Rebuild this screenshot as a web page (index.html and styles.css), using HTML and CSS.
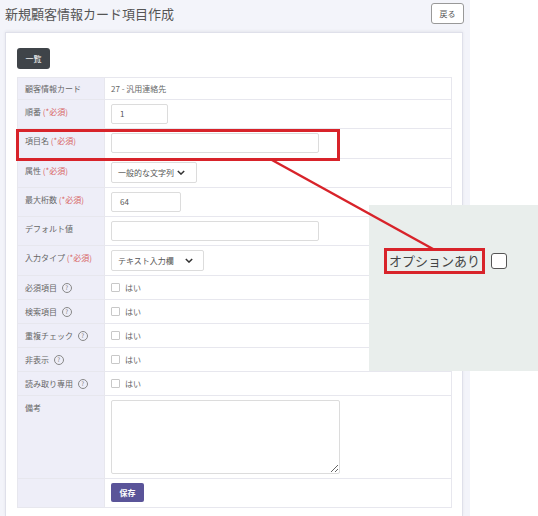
FILE: index.html
```html
<!DOCTYPE html>
<html lang="ja">
<head>
  <meta charset="UTF-8" />
  <title>新規顧客情報カード項目作成</title>
  <link rel="stylesheet" href="styles.css">
</head>
<body>

<div class="screen">
  <div class="page">
    <div class="header">
      <h1>新規顧客情報カード項目作成</h1>
      <button class="btn-back">戻る</button>
    </div>

    <div class="card">
      <button class="btn-list">一覧</button>

      <table class="form-table">
        <tr class="row-text">
          <th>顧客情報カード</th>
          <td>27 - 汎用連絡先</td>
        </tr>
        <tr class="row-input">
          <th>順番 <span class="req">(*必須)</span></th>
          <td><div class="input w-order">1</div></td>
        </tr>
        <tr class="row-input">
          <th>項目名 <span class="req">(*必須)</span></th>
          <td><div class="input w-long"></div></td>
        </tr>
        <tr class="row-input">
          <th>属性 <span class="req">(*必須)</span></th>
          <td>
            <div class="select">一般的な文字列
              <svg class="chev" viewBox="0 0 10 6" width="8" height="5"><path d="M1 1l4 4 4-4" fill="none" stroke="#333" stroke-width="1.8"/></svg>
            </div>
          </td>
        </tr>
        <tr class="row-input">
          <th>最大桁数 <span class="req">(*必須)</span></th>
          <td><div class="input w-digits">64</div></td>
        </tr>
        <tr class="row-input">
          <th>デフォルト値</th>
          <td><div class="input w-long"></div></td>
        </tr>
        <tr class="row-input">
          <th>入力タイプ <span class="req">(*必須)</span></th>
          <td>
            <div class="select select-type">テキスト入力欄
              <svg class="chev" viewBox="0 0 10 6" width="8" height="5"><path d="M1 1l4 4 4-4" fill="none" stroke="#333" stroke-width="1.8"/></svg>
            </div>
          </td>
        </tr>
        <tr class="row-check">
          <th>必須項目 <span class="help">?</span></th>
          <td><span class="check"></span>はい</td>
        </tr>
        <tr class="row-check">
          <th>検索項目 <span class="help">?</span></th>
          <td><span class="check"></span>はい</td>
        </tr>
        <tr class="row-check">
          <th>重複チェック <span class="help">?</span></th>
          <td><span class="check"></span>はい</td>
        </tr>
        <tr class="row-check">
          <th>非表示 <span class="help">?</span></th>
          <td><span class="check"></span>はい</td>
        </tr>
        <tr class="row-check">
          <th>読み取り専用 <span class="help">?</span></th>
          <td><span class="check"></span>はい</td>
        </tr>
        <tr class="row-area">
          <th>備考</th>
          <td><textarea class="memo"></textarea></td>
        </tr>
        <tr class="row-save">
          <th></th>
          <td><button class="btn-save">保存</button></td>
        </tr>
      </table>
    </div>
  </div>

  <!-- annotation overlay -->
  <div class="mark-box"></div>
  <div class="option-panel">
    <span class="option-label">オプションあり</span>
    <span class="option-check"></span>
  </div>
  <svg class="mark-line" width="538" height="516">
    <line x1="272" y1="160" x2="433" y2="249" stroke="#d8232a" stroke-width="2.5"/>
  </svg>
</div>

</body>
</html>
```

FILE: styles.css
```css
body {
  margin: 0;
  background: #fff;
  font-family: "Noto Sans CJK JP", "Noto Sans", sans-serif;
  color: #666;
}

.screen {
  position: relative;
  width: 538px;
  height: 516px;
  overflow: hidden;
}

.page {
  width: 470px;
  height: 516px;
  background: #f3f4fa;
}

.header {
  display: flex;
  justify-content: space-between;
  align-items: flex-start;
  height: 32px;
  padding: 3px 6px 0 5px;
  box-sizing: border-box;
}

.header h1 {
  margin: 3px 0 0;
  font-size: 13px;
  font-weight: normal;
  color: #555;
  line-height: 16px;
}

.btn-back {
  width: 33px;
  height: 21px;
  padding: 0;
  background: #fff;
  border: 1px solid #999;
  border-radius: 3px;
  font-family: inherit;
  font-size: 8px;
  color: #555;
}

.card {
  margin-left: 5px;
  width: 458px;
  height: 484px;
  box-sizing: border-box;
  background: #fff;
  border: 1px solid #dfe0ea;
  border-bottom: none;
  box-shadow: 0 -1px 3px rgba(0, 0, 0, 0.06);
  padding: 15px 11px 0 11px;
}

.btn-list {
  display: block;
  width: 33px;
  height: 21px;
  padding: 0;
  background: #3f4449;
  color: #fff;
  border: none;
  border-radius: 3px;
  font-family: inherit;
  font-size: 8px;
}

.form-table {
  margin-top: 8px;
  width: 435px;
  border-collapse: collapse;
  font-size: 8px;
}

.form-table th,
.form-table td {
  border: 1px solid #e7e7ee;
  padding: 0 6px;
  text-align: left;
}

.form-table th {
  width: 72px;
  background: #eeeef8;
  font-weight: normal;
  color: #666;
  vertical-align: top;
  padding: 7px 7px 0;
  line-height: 10px;
  white-space: nowrap;
}

.form-table td {
  color: #666;
  vertical-align: middle;
}

.row-text th { height: 15px; padding-top: 6px; }
.row-text td { height: 15px; }

.row-input th { height: 21.3px; }
.row-input td { height: 21.3px; }

.row-check th { height: 16px; }
.row-check td { height: 16px; }

.row-area th { height: 75px; }
.row-area td { height: 75px; }

.row-save th { height: 21px; }
.row-save td { height: 21px; }

.req {
  color: #d86464;
}

.help {
  display: inline-block;
  width: 8px;
  height: 8px;
  margin-left: 3px;
  border: 1px solid #888;
  border-radius: 50%;
  font-size: 6px;
  line-height: 8px;
  text-align: center;
  vertical-align: top;
  color: #777;
}

.input {
  height: 20px;
  box-sizing: border-box;
  border: 1px solid #dcdcdc;
  border-radius: 2px;
  padding: 0 8px;
  line-height: 18px;
  color: #555;
}

.w-order { width: 57px; }
.w-digits { width: 70px; }
.w-long { width: 208px; }

.select {
  display: flex;
  align-items: center;
  gap: 3px;
  width: 86px;
  height: 21px;
  box-sizing: border-box;
  border: 1px solid #dcdcdc;
  border-radius: 2px;
  padding: 0 6px;
  color: #555;
}

.select-type {
  width: 93px;
  gap: 11px;
}

.chev {
  flex: none;
}

.check {
  display: inline-block;
  width: 7px;
  height: 7px;
  margin-right: 5px;
  border: 1px solid #c8c8c8;
  border-radius: 1px;
  vertical-align: -1px;
}

.memo {
  display: block;
  width: 229px;
  height: 74px;
  box-sizing: border-box;
  border: 1px solid #dcdcdc;
  border-radius: 2px;
  margin: 0;
}

.btn-save {
  display: block;
  width: 33px;
  height: 19px;
  padding: 0;
  background: #5a5499;
  color: #fff;
  border: none;
  border-radius: 2px;
  font-family: inherit;
  font-size: 8px;
  font-weight: bold;
}

.mark-box {
  position: absolute;
  left: 16px;
  top: 129px;
  width: 324px;
  height: 32px;
  box-sizing: border-box;
  border: 3px solid #d8232a;
}

.option-panel {
  position: absolute;
  left: 369px;
  top: 205px;
  width: 169px;
  height: 166px;
  box-sizing: border-box;
  background: #e9eeec;
  padding: 43px 0 0 15px;
  display: flex;
  align-items: flex-start;
  gap: 6px;
}

.option-label {
  display: block;
  height: 26px;
  box-sizing: border-box;
  border: 3px solid #d8232a;
  padding: 0 2px;
  font-size: 13px;
  line-height: 20px;
  color: #444;
  white-space: nowrap;
}

.option-check {
  display: block;
  width: 16px;
  height: 16px;
  margin-top: 5px;
  box-sizing: border-box;
  background: #fff;
  border: 1px solid #555;
  border-radius: 3px;
}

.mark-line {
  position: absolute;
  left: 0;
  top: 0;
  pointer-events: none;
}
```
